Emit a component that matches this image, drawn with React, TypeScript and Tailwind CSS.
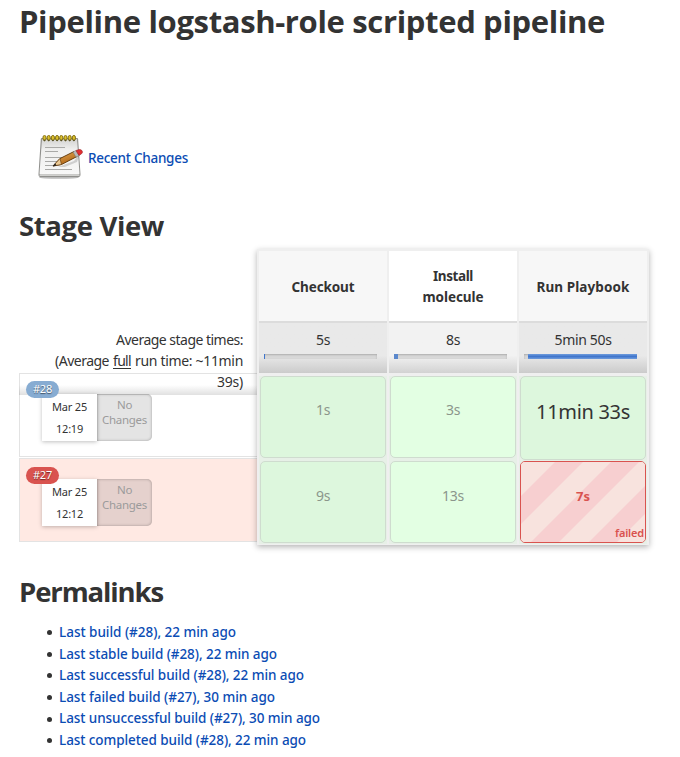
import React from "react";

const permalinks = [
  { text: "Last build (#28), 22 min ago", width: "w-[177px]" },
  { text: "Last stable build (#28), 22 min ago", width: "w-[218px]" },
  { text: "Last successful build (#28), 22 min ago", width: "w-[245px]" },
  { text: "Last failed build (#27), 30 min ago", width: "w-[216px]" },
  { text: "Last unsuccessful build (#27), 30 min ago", width: "w-[261px]" },
  { text: "Last completed build (#28), 22 min ago", width: "w-[247px]" },
];

function NotepadIcon() {
  const rings = [0, 1, 2, 3, 4, 5, 6, 7];
  return (
    <svg width="46" height="46" viewBox="0 0 46 46">
      <defs>
        <linearGradient id="paper" x1="0" y1="0" x2="0" y2="1">
          <stop offset="0" stopColor="#d4d4d2" />
          <stop offset="0.3" stopColor="#efefee" />
          <stop offset="1" stopColor="#f8f8f8" />
        </linearGradient>
        <linearGradient id="wood" x1="0" y1="0" x2="0.6" y2="1">
          <stop offset="0" stopColor="#f0b35c" />
          <stop offset="1" stopColor="#a85e10" />
        </linearGradient>
      </defs>
      <ellipse cx="21" cy="42.400" rx="20" ry="1.400" fill="#bbb" />
      <path d="M4 3h35q1 0 1.100 1L42.500 39q.2 3-2 3H2.500Q.3 42 .5 39L2.800 4q0-1 1.200-1z" fill="#8f8f8c" />
      <path d="M4 4h35l2.500 34.500q0 1-1 1H2.500q-1 0-1-1z" fill="url(#paper)" />
      <path d="M1.500 39.500h40v1.500h-40z" fill="#d0d0ce" />
      <path d="M7 12.500h20M7 16.500h13M7 22.500h22M7 26.500h17M7 30.500h12M7 34.500h27" stroke="#a9a9a7" strokeWidth="1" />
      {rings.map((i) => (
        <g key={i}>
          <ellipse cx={6.500 + i * 4.200} cy="3" rx="1.600" ry="2.700" fill="#dcc12c" stroke="#7d6910" strokeWidth="0.9" />
          <circle cx={6.500 + i * 4.200} cy="5.300" r="0.900" fill="#55502f" />
        </g>
      ))}
      <path d="M20 32l16-6 6-8-3 9-12 5z" fill="#000" opacity=".15" />
      <path d="M15 31l7-7.500L36 16.500l3 5L23.500 29.500z" fill="url(#wood)" stroke="#5b3306" strokeWidth=".9" />
      <path d="M15 31l7-7.500 1.500 6z" fill="#ecc993" stroke="#5b3306" strokeWidth=".6" />
      <path d="M14.700 31.300l2.500-3 1.300 2.200z" fill="#222" />
      <path d="M35 17l3-1.500 3 5-3 1.600z" fill="#b9bab9" stroke="#777" strokeWidth=".5" />
      <path d="M38 15.500l3.300-1q2.400-.1 3 1.800.5 1.700-.8 2.500L41 20.500z" fill="#e22f32" stroke="#971d20" strokeWidth=".6" />
    </svg>
  );
}

/* Spreads a line of text to a fixed advance width. */
function Fit({ text, width, className = "" }: { text: string; width: string; className?: string }) {
  const ref = React.useRef<HTMLSpanElement>(null);
  const [spacing, setSpacing] = React.useState(0);
  React.useLayoutEffect(() => {
    const el = ref.current;
    if (!el || !el.parentElement) return;
    const natural = el.getBoundingClientRect().width;
    const target = el.parentElement.getBoundingClientRect().width;
    setSpacing((target - natural) / text.length);
  }, [text]);
  return (
    <span className={`inline-block whitespace-nowrap text-left ${width} ${className}`}>
      <span ref={ref} className="inline-block [text-decoration:inherit]" style={{ letterSpacing: `${spacing}px` }}>{text}</span>
    </span>
  );
}

function BuildRow({ id, time, failed }: { id: string; time: string; failed?: boolean }) {
  return (
    <div className={`relative h-[84px] border border-r-0 border-[#e3e3e3] pl-[22px] pt-5 ${failed ? "bg-[#ffe9e3]" : "bg-white"}`}>
      <div className="flex h-[47px]">
        <div className="z-20 flex w-[55px] flex-col items-center bg-white pt-[2px] text-[11px] leading-[22px] shadow-[0_1px_4px_rgba(0,0,0,0.25)]">
          <Fit text="Mar 25" width="w-[35px]" />
          <Fit text={time} width="w-[27px]" />
        </div>
        <div className={`flex w-[55px] flex-col items-center rounded-r-[5px] pt-[3px] text-[11.500px] leading-[15px] text-[#9b9b9b] shadow-[inset_0_0_3px_rgba(0,0,0,0.3)] ${failed ? "bg-[#e5d1cd]" : "bg-[#e4e4e4]"}`}>
          <Fit text="No" width="w-[15px]" />
          <Fit text="Changes" width="w-[45px]" />
        </div>
      </div>
      <span className={`absolute left-[6px] z-30 flex h-[17px] w-[33px] items-center justify-center rounded-full text-[11px] text-white [text-shadow:0_1px_1px_rgba(0,0,0,0.5)] ${failed ? "top-[8px] bg-[#d9534f]" : "top-[7px] bg-[#87acd2]"}`}>
        <Fit text={id} width="w-[19px]" />
      </span>
    </div>
  );
}

function Average({ label, width, bar, dark }: { label: string; width: string; bar: React.ReactNode; dark?: boolean }) {
  return (
    <div className={`flex h-[52px] flex-col items-center border-t-2 border-[#dcdcdc] bg-linear-to-b ${dark ? "from-[#e9e9e9] from-65% to-[#cbcbcb]" : "from-[#f2f2f2] from-65% to-[#d2d2d2]"}`}>
      <div className="mt-[6px] h-[23px] text-[14px] leading-[22px]"><Fit text={label} width={width} /></div>
      <div className="mr-[5px] mt-[2px] flex h-[5px] w-[113px] bg-[#d8d8d8] shadow-[inset_0_1px_2px_rgba(0,0,0,0.2)]">{bar}</div>
    </div>
  );
}

function Cell({ text, width, even, lower }: { text: string; width: string; even?: boolean; lower?: boolean }) {
  return (
    <div className={`mx-px flex h-[82px] justify-center rounded-[5px] border border-[#cfdccf] text-[14px] leading-[22px] text-[#8b968b] ${lower ? "pt-[23px]" : "pt-[22px]"} ${even ? "bg-[#e3ffe3]" : "bg-[#ddf7dd]"}`}>
      <Fit text={text} width={width} />
    </div>
  );
}

const columnEdge = "w-[128px] bg-[#e7f0e7]";

export default function App() {
  return (
    <main className="h-[757px] w-[680px] overflow-hidden bg-white px-[19px] font-['Noto_Sans','Open_Sans',sans-serif] text-[#333]">
      <h1 className="h-[44px] font-['Open_Sans','Noto_Sans',sans-serif] text-[31px] font-bold leading-[43px]">
        <Fit text="Pipeline logstash-role scripted pipeline" width="w-[586px]" />
      </h1>
      <div className="mt-[90px] flex h-[48px] items-center pl-[19px] text-[13.500px] font-medium text-[#0b4cb4]">
        <NotepadIcon />
        <Fit text="Recent Changes" width="w-[100px]" className="ml-1" />
      </div>
      <h2 className="mt-[22px] h-[45px] font-['Open_Sans','Noto_Sans',sans-serif] text-[27.500px] font-bold leading-[44px]">
        <Fit text="Stage View" width="w-[145px]" />
      </h2>

      <section className="flex h-[296px]">
        <div className="w-[238px]">
          <div className="relative z-10 flex h-[124px] flex-col items-end pr-[14px] pt-[80px] text-[14px] leading-[21.300px]">
            <Fit text="Average stage times:" width="w-[127px]" />
            <span className="flex">
              <Fit text="(Average" width="w-[54px]" />
              <Fit text="full" width="w-[18px]" className="ml-[4px] underline underline-offset-2" />
              <Fit text="run time: ~11min" width="w-[108px]" className="ml-[4px]" />
            </span>
            <Fit text="39s)" width="w-[26px]" className="-mt-px" />
            <div className="absolute left-0 top-[136px] h-[10px] w-full bg-linear-to-b from-transparent to-black/12" />
          </div>
          <BuildRow id="#28" time="12:19" />
          <div className="h-px" />
          <BuildRow id="#27" time="12:12" failed />
        </div>

        <div className="relative z-10 flex w-[392px] gap-[2px] bg-[#efefef] px-[2px] pb-px pt-[2px] shadow-[0_2px_6px_rgba(0,0,0,0.3)]">
          <div className={columnEdge}>
            <div className="flex h-[70px] items-center justify-center bg-[#f7f7f7] pt-[3px] text-[13.500px] font-bold">
              <Fit text="Checkout" width="w-[63px]" />
            </div>
            <Average label="5s" width="w-[14px]" dark bar={<div className="h-[5px] w-px bg-[#3f75cc]" />} />
            <div className="flex flex-col gap-[3px] border-t-[3px] border-[#efefef]">
              <Cell text="1s" width="w-[14px]" />
              <Cell text="9s" width="w-[14px]" lower />
            </div>
          </div>
          <div className={columnEdge}>
            <div className="flex h-[70px] flex-col items-center justify-center bg-white pt-[2px] text-[13.500px] font-bold leading-[21px]">
              <Fit text="Install" width="w-[40px]" />
              <Fit text="molecule" width="w-[61px]" />
            </div>
            <Average label="8s" width="w-[14px]" bar={<div className="h-[5px] w-[4px] bg-[#5b88cc]" />} />
            <div className="flex flex-col gap-[3px] border-t-[3px] border-[#efefef]">
              <Cell text="3s" width="w-[14px]" even />
              <Cell text="13s" width="w-[22px]" even lower />
            </div>
          </div>
          <div className={columnEdge}>
            <div className="flex h-[70px] items-center justify-center bg-[#f7f7f7] pt-[3px] text-[13.500px] font-bold">
              <Fit text="Run Playbook" width="w-[93px]" />
            </div>
            <Average label="5min 50s" width="w-[57px]" dark bar={<div className="ml-1 h-[5px] flex-1 bg-linear-to-b from-[#6f9cdd] via-[#4176cc] to-[#6f9cdd]" />} />
            <div className="flex flex-col gap-px border-t-[3px] border-[#efefef]">
              <div className="mx-px flex h-[84px] justify-center rounded-[5px] border border-[#cfdccf] bg-[#ddf7dd] pt-[20px] text-[20px] leading-[30px]">
                <Fit text="11min 33s" width="w-[94px]" />
              </div>
              <div className="relative mx-px flex h-[82px] justify-center overflow-hidden rounded-[5px] border border-[#d9534f] text-[#d9534f]">
                <svg className="absolute inset-0 h-full w-full" viewBox="0 0 124 80" preserveAspectRatio="none">
                  <path d="M0 0h124v80H0z" fill="#f8e3de" />
                  <path d="M34 0h28L0 62V34zM90 0h28L38 80H10zM124 24v28L96 80H68z" fill="#f7cfd0" />
                </svg>
                <span className="relative pt-[23px] text-[13px] font-bold leading-[22px]"><Fit text="7s" width="w-[14px]" /></span>
                <span className="absolute bottom-[1px] right-[1px] text-[11px] font-semibold leading-[17px]"><Fit text="failed" width="w-[29px]" /></span>
              </div>
            </div>
          </div>
        </div>
      </section>

      <h2 className="mt-[25px] h-[45px] font-['Open_Sans','Noto_Sans',sans-serif] text-[27.500px] font-bold leading-[44px]">
        <Fit text="Permalinks" width="w-[144px]" />
      </h2>
      <ul className="mt-[7px] pl-[28px] text-[13.500px] font-medium leading-[21.600px] text-[#0b4cb4]">
        {permalinks.map((link) => (
          <li key={link.text} className="flex h-[21.600px] items-center">
            <span className="mr-[7px] h-[5px] w-[5px] rounded-full bg-[#333]" />
            <Fit text={link.text} width={link.width} />
          </li>
        ))}
      </ul>
    </main>
  );
}
